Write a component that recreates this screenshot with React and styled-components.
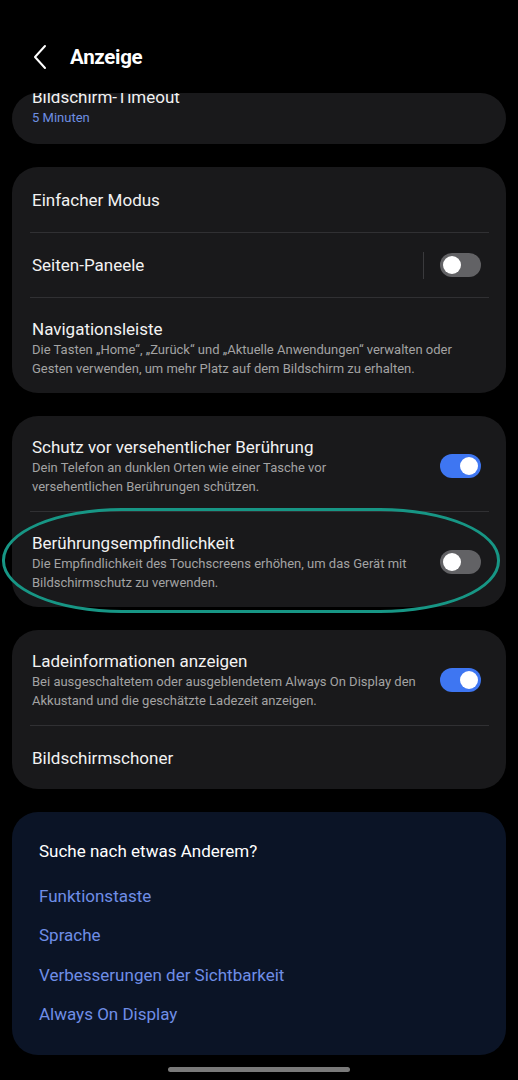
import React from 'react';
import styled, { createGlobalStyle } from 'styled-components';

const GlobalStyle = createGlobalStyle`
  html, body {
    margin: 0;
    padding: 0;
    background: #000;
  }
  body {
    font-family: Roboto, "Noto Sans", sans-serif;
    color: #f2f2f2;
    -webkit-font-smoothing: antialiased;
  }
`;

const Screen = styled.div`
  width: 518px;
  height: 1080px;
  background: #000;
  display: flex;
  flex-direction: column;
  overflow: hidden;
`;

const Header = styled.header`
  height: 93px;
  box-sizing: border-box;
  padding: 21px 0 0 32px;
  display: flex;
  align-items: flex-start;
`;

const HeaderInner = styled.div`
  height: 72px;
  display: flex;
  align-items: center;
  gap: 22px;
`;

const Title = styled.h1`
  margin: 0;
  font-size: 20.5px;
  font-weight: 700;
  color: #fff;
  letter-spacing: -0.3px;
`;

const Content = styled.main`
  padding: 0 12px;
  display: flex;
  flex-direction: column;
  gap: 23px;
`;

const Card = styled.section`
  position: relative;
  background: ${(p) => (p.$navy ? '#0b1426' : '#19191b')};
  border-radius: 26px;
  display: flex;
  flex-direction: column;
  overflow: ${(p) => (p.$clip ? 'hidden' : 'visible')};
  height: ${(p) => (p.$height ? `${p.$height}px` : 'auto')};
`;

const ClippedRow = styled.div`
  margin-top: -7px;
  padding: 0 20px;
  display: flex;
  flex-direction: column;
`;

const Row = styled.div`
  display: flex;
  align-items: center;
  box-sizing: border-box;
  min-height: ${(p) => p.$h || 64}px;
  padding: ${(p) => (p.$desc ? '20px 25px 15px 20px' : '0 25px 0 20px')};
  gap: 16px;
`;

const TextCol = styled.div`
  flex: 1;
  display: flex;
  flex-direction: column;
`;

const ItemTitle = styled.div`
  font-size: 17px;
  line-height: 22px;
  color: #f2f2f2;
`;

const Desc = styled.div`
  font-size: 13px;
  line-height: 19px;
  color: #a3a3a3;
`;

const Value = styled.div`
  font-size: 13px;
  line-height: 20px;
  color: #6e8fe2;
`;

const Divider = styled.div`
  height: 1px;
  background: #303033;
  margin: 0 17px 0 18px;
`;

const VLine = styled.div`
  width: 1px;
  height: 27px;
  background: #3a3a3d;
`;

const Track = styled.div`
  position: relative;
  width: 41px;
  height: 24px;
  border-radius: 12px;
  background: ${(p) => (p.$on ? '#3e76f2' : '#626265')};
  flex-shrink: 0;
`;

const Knob = styled.div`
  position: absolute;
  top: 3px;
  left: ${(p) => (p.$on ? '20px' : '3px')};
  width: 18px;
  height: 18px;
  border-radius: 50%;
  background: #fff;
`;

const Highlight = styled.div`
  position: absolute;
  left: -10px;
  top: 92px;
  width: 498px;
  height: 105px;
  box-sizing: border-box;
  border: 3px solid #179685;
  border-radius: 120px / 52px;
  pointer-events: none;
`;

const SuggestTitle = styled.div`
  font-size: 17px;
  line-height: 22px;
  color: #fff;
  margin-bottom: 15px;
`;

const SuggestLink = styled.div`
  font-size: 17px;
  line-height: 39.3px;
  color: #6f8ee6;
`;

const Suggest = styled.div`
  padding: 28px 27px 21px;
  display: flex;
  flex-direction: column;
`;

const HomeBar = styled.div`
  width: 182px;
  height: 5px;
  border-radius: 3px;
  background: #7a7a7a;
  margin: 12px auto 0;
`;

const Toggle = ({ on }) => (
  <Track $on={on}>
    <Knob $on={on} />
  </Track>
);

const BackIcon = () => (
  <svg width="16" height="26" viewBox="0 0 16 26" fill="none">
    <path d="M13 2 L3 13 L13 24" stroke="#fff" strokeWidth="2" strokeLinecap="round" strokeLinejoin="round" />
  </svg>
);

const links = ['Funktionstaste', 'Sprache', 'Verbesserungen der Sichtbarkeit', 'Always On Display'];

export default function App() {
  return (
    <Screen>
      <GlobalStyle />
      <Header>
        <HeaderInner>
          <BackIcon />
          <Title>Anzeige</Title>
        </HeaderInner>
      </Header>
      <Content>
        <Card $clip $height={51}>
          <ClippedRow>
            <ItemTitle>Bildschirm-Timeout</ItemTitle>
            <Value>5 Minuten</Value>
          </ClippedRow>
        </Card>

        <Card>
          <Row $h={65}>
            <TextCol>
              <ItemTitle>Einfacher Modus</ItemTitle>
            </TextCol>
          </Row>
          <Divider />
          <Row $h={64}>
            <TextCol>
              <ItemTitle>Seiten-Paneele</ItemTitle>
            </TextCol>
            <VLine />
            <Toggle on={false} />
          </Row>
          <Divider />
          <Row $desc>
            <TextCol>
              <ItemTitle>Navigationsleiste</ItemTitle>
              <Desc>
                Die Tasten „Home“, „Zurück“ und „Aktuelle Anwendungen“ verwalten oder Gesten verwenden, um mehr
                Platz auf dem Bildschirm zu erhalten.
              </Desc>
            </TextCol>
          </Row>
        </Card>

        <Card>
          <Row $desc>
            <TextCol>
              <ItemTitle>Schutz vor versehentlicher Berührung</ItemTitle>
              <Desc>
                Dein Telefon an dunklen Orten wie einer Tasche vor
                <br />
                versehentlichen Berührungen schützen.
              </Desc>
            </TextCol>
            <Toggle on />
          </Row>
          <Divider />
          <Row $desc>
            <TextCol>
              <ItemTitle>Berührungsempfindlichkeit</ItemTitle>
              <Desc>
                Die Empfindlichkeit des Touchscreens erhöhen, um das Gerät mit
                <br />
                Bildschirmschutz zu verwenden.
              </Desc>
            </TextCol>
            <Toggle on={false} />
          </Row>
          <Highlight />
        </Card>

        <Card>
          <Row $desc>
            <TextCol>
              <ItemTitle>Ladeinformationen anzeigen</ItemTitle>
              <Desc>
                Bei ausgeschaltetem oder ausgeblendetem Always On Display den
                <br />
                Akkustand und die geschätzte Ladezeit anzeigen.
              </Desc>
            </TextCol>
            <Toggle on />
          </Row>
          <Divider />
          <Row $h={63}>
            <TextCol>
              <ItemTitle>Bildschirmschoner</ItemTitle>
            </TextCol>
          </Row>
        </Card>

        <Card $navy>
          <Suggest>
            <SuggestTitle>Suche nach etwas Anderem?</SuggestTitle>
            {links.map((l) => (
              <SuggestLink key={l}>{l}</SuggestLink>
            ))}
          </Suggest>
        </Card>
      </Content>
      <HomeBar />
    </Screen>
  );
}
